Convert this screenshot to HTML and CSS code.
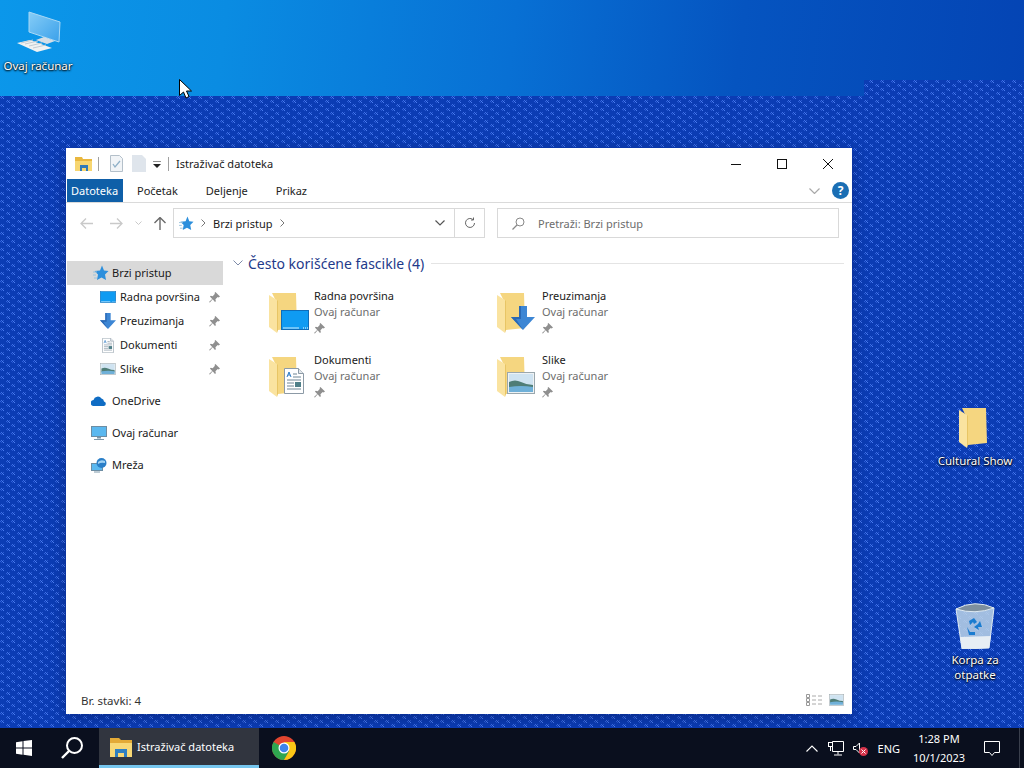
FILE: index.html
```html
<!DOCTYPE html>
<html lang="sr">
<head>
    <meta charset="UTF-8">
    <title>Istraživač datoteka</title>
    <link rel="stylesheet" href="styles.css">
</head>
<body>
    <svg class="defs" width="0" height="0">
        <defs>
            <pattern id="dither" width="11" height="8" patternUnits="userSpaceOnUse">
                <rect x="1" y="0" width="1" height="1" fill="#3f70e6"/>
                <rect x="3" y="0" width="1" height="1" fill="#2858d2"/>
                <rect x="0" y="1" width="1" height="1" fill="#2f60dc"/>
                <rect x="2" y="1" width="1" height="1" fill="#4a7cf0"/>
                <rect x="1" y="2" width="1" height="1" fill="#2858d2"/>
                <rect x="3" y="2" width="1" height="1" fill="#4a7cf0"/>
                <rect x="7" y="4" width="1" height="1" fill="#3f70e6"/>
                <rect x="9" y="4" width="1" height="1" fill="#2858d2"/>
                <rect x="6" y="5" width="1" height="1" fill="#2f60dc"/>
                <rect x="8" y="5" width="1" height="1" fill="#4a7cf0"/>
                <rect x="7" y="6" width="1" height="1" fill="#2858d2"/>
                <rect x="9" y="6" width="1" height="1" fill="#4a7cf0"/>
            </pattern>
            <linearGradient id="screen" x1="0" y1="0" x2="1" y2="1">
                <stop offset="0" stop-color="#86cdf7"/>
                <stop offset="1" stop-color="#3aa0ea"/>
            </linearGradient>
            <symbol id="folder" viewBox="0 0 28 40">
                <path d="M3 0h24l1 35-19 2V12z" fill="#f5d680"/>
                <path d="M0 2l8 5v33l-8-6z" fill="#fae3a0"/>
                <path d="M8 7v33l1-3V8z" fill="#e8c565"/>
            </symbol>
            <symbol id="desktop" viewBox="0 0 28 20">
                <rect x=".5" y=".5" width="27" height="19" fill="#0f9bf2" stroke="#0f6cb8"/>
                <path d="M2 18h16" stroke="#cfeeff"/>
                <path d="M22 18h1m1 0h1m1 0h1" stroke="#fff"/>
            </symbol>
            <symbol id="down" viewBox="0 0 24 24">
                <path d="M8 0h8v11h8L12 24 0 11h8z" fill="#3d86d4"/>
                <path d="M12 24L0 11h8V0h2v13H5z" fill="#2a68b4"/>
            </symbol>
            <symbol id="doc" viewBox="0 0 20 26">
                <path d="M.5.5h14l5 5v20H.5z" fill="#fff" stroke="#8c9aa6"/>
                <path d="M14.5 .5v5h5" fill="#e3e8ec" stroke="#8c9aa6"/>
                <path d="M3 9l2-5 2 5M4 7h2" fill="none" stroke="#2a79c4"/>
                <path d="M9 6h4M9 9h8M3 12h14M3 15h7M3 18h7M3 21h14" stroke="#6f8594"/>
                <rect x="11" y="14" width="6" height="5" fill="#4f7f88"/>
            </symbol>
            <symbol id="pic" viewBox="0 0 28 22">
                <rect x=".5" y=".5" width="27" height="21" fill="#eef2f4" stroke="#9aa7ad"/>
                <rect x="2" y="2" width="24" height="18" fill="#cfe3f1"/>
                <path d="M2 10q6-3 12 0t12 3v4H2z" fill="#4f7d76"/>
                <path d="M2 15q12-2 24 0v5H2z" fill="#6fb0d8"/>
            </symbol>
            <symbol id="star" viewBox="0 0 16 16">
                <path d="M9 .5l2 5 4.500.5-3.500 3.500 1 5.500-4.500-2.500L4 15l1-5.500L1.500 6l5.500-.5z" fill="#2c8fdc"/>
                <path d="M0 7h4M0 10h3M1 13h3" stroke="#9cc4de"/>
            </symbol>
            <symbol id="pin" viewBox="0 0 12 12">
                <path d="M7 0l5 5-1.500 1-1-.5L7 8l.5 2L6.500 11 4 8l-3 3.500L0 11l3.500-3.500L1 5l1-1 2 .5L6.500 2 6 1z" fill="#8f8f8f"/>
            </symbol>
        </defs>
    </svg>

    <div class="desktop">
        <svg class="dither-layer" width="1024" height="768"><rect width="1024" height="768" fill="url(#dither)"/></svg>
        <div class="sky"></div>

        <div class="desk-icon icon-pc">
            <svg width="48" height="46" viewBox="0 0 48 46">
                <path d="M15 2l31 10-1 20-30-10z" fill="url(#screen)" stroke="#a8d8f5"/>
                <path d="M22 30l8-3 11 4-8 3z" fill="#d5dee6"/>
                <path d="M3 33l13-3 22 8-15 4z" fill="#f0f2f2"/>
                <path d="M7 33l12-3M11 34l13-3M15 36l13-3M19 38l13-3" stroke="#c4ccd2"/>
            </svg>
            <span>Ovaj računar</span>
        </div>
        <div class="desk-icon icon-show">
            <svg width="28" height="40"><use href="#folder"/></svg>
            <span>Cultural Show</span>
        </div>
        <div class="desk-icon icon-bin">
            <svg width="40" height="46" viewBox="0 0 40 46">
                <path d="M1 6l38-1-5 40-27 1z" fill="#bcd4e8" fill-opacity=".85" stroke="#dfeaf2"/>
                <path d="M1 6q19-10 38-1-19 7-38 1z" fill="#7d8f9e" stroke="#dfeaf2"/>
                <path d="M5 34l31-1-2 12-27 1z" fill="#e7eef4"/>
                <path d="M14 18l5-3 3 4-3 2-1-2-3 3zM25 18l2 6h-4l1 3-5-3 4-3zM12 24l3 5h5v3h-6z" fill="#1a7cd0"/>
            </svg>
            <span>Korpa za<br>otpatke</span>
        </div>

        <svg class="cursor" width="13" height="21" viewBox="0 0 13 21">
            <path d="M.5.5v16l4-3.500 2.500 6 3-1.500-2.500-5.500h5z" fill="#fff" stroke="#000"/>
        </svg>

        <div class="window">
            <div class="titlebar">
                <svg width="17" height="15" viewBox="0 0 17 15">
                    <path d="M0 1h7l1 2h9v12H0z" fill="#e9b73f"/>
                    <path d="M0 5h17v10H0z" fill="#f7d671"/>
                    <path d="M5 9h8v6h-2v-3H7v3H5z" fill="#2f79b8"/>
                </svg>
                <i class="qa-sep"></i>
                <svg class="qa-doc" width="13" height="17" viewBox="0 0 13 17">
                    <path d="M.5.5h9l3 3v13H.5z" fill="#f1f4f7" stroke="#b4c0ca"/>
                    <path d="M3 9l2 3 5-6" fill="none" stroke="#8fb0c8" stroke-width="1.300"/>
                </svg>
                <svg class="qa-blank" width="14" height="17" viewBox="0 0 14 17">
                    <path d="M0 0h10l4 4v13H0z" fill="#dfe5ec"/>
                </svg>
                <svg class="qa-drop" width="8" height="7" viewBox="0 0 8 7">
                    <path d="M0 0h8" stroke="#222"/>
                    <path d="M0 3h8L4 7z" fill="#222"/>
                </svg>
                <i class="qa-sep qa-sep-last"></i>
                <span class="win-title">Istraživač datoteka</span>
                <div class="win-controls">
                    <svg width="10" height="10" viewBox="0 0 10 10"><path d="M0 5.500h10" stroke="#111"/></svg>
                    <svg width="10" height="10" viewBox="0 0 10 10"><rect x=".5" y=".5" width="9" height="9" fill="none" stroke="#111"/></svg>
                    <svg width="10" height="10" viewBox="0 0 10 10"><path d="M0 0l10 10M10 0L0 10" stroke="#111"/></svg>
                </div>
            </div>

            <div class="tabs">
                <span class="tab tab-file">Datoteka</span>
                <span class="tab">Početak</span>
                <span class="tab">Deljenje</span>
                <span class="tab">Prikaz</span>
                <svg class="ribbon-chevron" width="11" height="6" viewBox="0 0 11 6"><path d="M.5.5l5 5 5-5" fill="none" stroke="#a9a9a9" stroke-width="1.200"/></svg>
                <span class="help">?</span>
            </div>

            <div class="addressrow">
                <svg width="13" height="11" viewBox="0 0 13 11"><path d="M6 .5l-5 5 5 5M1 5.500h12" fill="none" stroke="#c9c9c9" stroke-width="1.300"/></svg>
                <svg class="arrow-fwd" width="13" height="11" viewBox="0 0 13 11"><path d="M7 .5l5 5-5 5M12 5.500H0" fill="none" stroke="#c9c9c9" stroke-width="1.300"/></svg>
                <svg class="nav-small" width="7" height="4" viewBox="0 0 7 4"><path d="M.5.500l3 3 3-3" fill="none" stroke="#c9c9c9"/></svg>
                <svg class="nav-up" width="12" height="13" viewBox="0 0 12 13"><path d="M.5 6l5.500-5.500L11.500 6M6 1v12" fill="none" stroke="#6a6a6a" stroke-width="1.400"/></svg>
                <div class="addressbox">
                    <svg width="15" height="15"><use href="#star"/></svg>
                    <svg class="crumb" width="5" height="8" viewBox="0 0 5 8"><path d="M.5.500l3.500 3.500-3.500 3.500" fill="none" stroke="#777"/></svg>
                    <span class="addr-text">Brzi pristup</span>
                    <svg class="crumb" width="5" height="8" viewBox="0 0 5 8"><path d="M.5.500l3.500 3.500-3.500 3.500" fill="none" stroke="#777"/></svg>
                    <svg class="addr-drop" width="10" height="6" viewBox="0 0 10 6"><path d="M.5.500l4.500 4.500 4.500-4.500" fill="none" stroke="#555" stroke-width="1.200"/></svg>
                    <div class="addr-refresh">
                        <svg width="12" height="12" viewBox="0 0 12 12"><path d="M10.500 6a4.500 4.500 0 1 1-1.500-3.400M9.500.5v2.500H7" fill="none" stroke="#666"/></svg>
                    </div>
                </div>
                <div class="searchbox">
                    <svg width="13" height="13" viewBox="0 0 13 13"><circle cx="8" cy="5" r="4" fill="none" stroke="#888"/><path d="M5 8l-4.500 4.500" stroke="#888" stroke-width="1.300"/></svg>
                    <span>Pretraži: Brzi pristup</span>
                </div>
            </div>

            <div class="panes">
                <nav class="sidebar">
                    <div class="nav-row active"><svg width="16" height="16"><use href="#star"/></svg><span>Brzi pristup</span></div>
                    <div class="nav-row sub"><svg width="16" height="12"><use href="#desktop"/></svg><span>Radna površina</span><svg class="pin" width="11" height="11"><use href="#pin"/></svg></div>
                    <div class="nav-row sub"><svg width="16" height="16"><use href="#down"/></svg><span>Preuzimanja</span><svg class="pin" width="11" height="11"><use href="#pin"/></svg></div>
                    <div class="nav-row sub"><svg width="16" height="15"><use href="#doc"/></svg><span>Dokumenti</span><svg class="pin" width="11" height="11"><use href="#pin"/></svg></div>
                    <div class="nav-row sub"><svg width="16" height="12"><use href="#pic"/></svg><span>Slike</span><svg class="pin" width="11" height="11"><use href="#pin"/></svg></div>
                    <div class="nav-row gap">
                        <svg width="16" height="10" viewBox="0 0 16 10"><path d="M3 10a3 3 0 0 1-.5-6A4.500 4.500 0 0 1 10.500 2.500 3.500 3.500 0 0 1 13 5.500a2.300 2.300 0 0 1 0 4.500z" fill="#0f6cc4"/></svg>
                        <span>OneDrive</span>
                    </div>
                    <div class="nav-row gap">
                        <svg width="16" height="15" viewBox="0 0 16 15"><rect x=".5" y=".5" width="15" height="10" fill="#5bb8ef" stroke="#6d8da3"/><path d="M6 11h4v1.500H6zM3 13h10v1H3z" fill="#7d98aa"/></svg>
                        <span>Ovaj računar</span>
                    </div>
                    <div class="nav-row gap">
                        <svg width="16" height="15" viewBox="0 0 16 15"><rect x=".5" y="5.500" width="11" height="7" fill="#5bb8ef" stroke="#6d8da3"/><path d="M3 13.500h6v1H3z" fill="#7d98aa"/><circle cx="10.500" cy="5" r="5" fill="#2a7fc8"/><path d="M7 4q3-3 7-1v2q-4-1-7 1z" fill="#9fd2f4"/></svg>
                        <span>Mreža</span>
                    </div>
                </nav>

                <main class="content">
                    <div class="group-head">
                        <svg width="10" height="6" viewBox="0 0 10 6"><path d="M.5.500l4.500 4.500 4.500-4.500" fill="none" stroke="#7d8aa8"/></svg>
                        <span>Često korišćene fascikle (4)</span>
                        <i></i>
                    </div>
                    <div class="tiles">
                        <div class="tile">
                            <svg class="tile-icon" width="40" height="40" viewBox="0 0 40 40"><use href="#folder" width="28" height="40"/><use href="#desktop" x="12" y="17" width="28" height="20"/></svg>
                            <div><div class="tile-name">Radna površina</div><div class="tile-sub">Ovaj računar</div><svg class="tile-pin" width="11" height="11"><use href="#pin"/></svg></div>
                        </div>
                        <div class="tile">
                            <svg class="tile-icon" width="40" height="40" viewBox="0 0 40 40"><use href="#folder" width="28" height="40"/><use href="#down" x="14" y="13" width="24" height="24"/></svg>
                            <div><div class="tile-name">Preuzimanja</div><div class="tile-sub">Ovaj računar</div><svg class="tile-pin" width="11" height="11"><use href="#pin"/></svg></div>
                        </div>
                        <div class="tile">
                            <svg class="tile-icon" width="40" height="40" viewBox="0 0 40 40"><use href="#folder" width="28" height="40"/><use href="#doc" x="15" y="11" width="20" height="26"/></svg>
                            <div><div class="tile-name">Dokumenti</div><div class="tile-sub">Ovaj računar</div><svg class="tile-pin" width="11" height="11"><use href="#pin"/></svg></div>
                        </div>
                        <div class="tile">
                            <svg class="tile-icon" width="40" height="40" viewBox="0 0 40 40"><use href="#folder" width="28" height="40"/><use href="#pic" x="10" y="15" width="28" height="22"/></svg>
                            <div><div class="tile-name">Slike</div><div class="tile-sub">Ovaj računar</div><svg class="tile-pin" width="11" height="11"><use href="#pin"/></svg></div>
                        </div>
                    </div>
                </main>
            </div>

            <div class="statusbar">
                <span>Br. stavki: 4</span>
                <svg class="view-list" width="16" height="12" viewBox="0 0 16 12">
                    <path d="M.5.500h3v3h-3zM.5 4.500h3v3h-3zM.5 8.500h3v3h-3z" fill="none" stroke="#999"/>
                    <path d="M6 2h4M12 2h4M6 6h4M12 6h4M6 10h4M12 10h4" stroke="#aaa"/>
                </svg>
                <svg class="view-tile" width="15" height="12"><use href="#pic"/></svg>
            </div>
        </div>

        <div class="taskbar">
            <svg class="start" width="16" height="16" viewBox="0 0 16 16">
                <path d="M0 2.300l6.500-1v6.200H0zM7.500 1.100L16 0v7.500H7.500zM0 8.500h6.500v6.200L0 13.700zM7.500 8.500H16V16l-8.500-1.200z" fill="#fff"/>
            </svg>
            <svg class="task-search" width="24" height="24" viewBox="0 0 24 24">
                <circle cx="14.500" cy="9.500" r="7.500" fill="none" stroke="#fff" stroke-width="2"/>
                <path d="M9 15L2 22" stroke="#fff" stroke-width="2.400"/>
            </svg>
            <div class="task-app">
                <svg width="22" height="20" viewBox="0 0 22 20">
                    <path d="M0 1h9l2 2h11v17H0z" fill="#e3aa37"/>
                    <path d="M0 6h22v14H0z" fill="#f8d876"/>
                    <path d="M5 12h12v8h-3v-4H8v4H5z" fill="#2f7fc1"/>
                </svg>
                <span>Istraživač datoteka</span>
            </div>
            <svg class="chrome" width="24" height="24" viewBox="0 0 24 24">
                <circle cx="12" cy="12" r="12" fill="#e2452f"/>
                <path d="M12 12L1.600 6A12 12 0 0 0 12 24l5.200-9z" fill="#2fa650"/>
                <path d="M12 6h10.400A12 12 0 0 1 12 24l5.200-9z" fill="#fbc716"/>
                <circle cx="12" cy="12" r="5.500" fill="#fff"/>
                <circle cx="12" cy="12" r="4.300" fill="#3f84ea"/>
            </svg>
            <div class="tray">
                <svg width="12" height="7" viewBox="0 0 12 7"><path d="M.5 6.500L6 1l5.500 5.500" fill="none" stroke="#fff" stroke-width="1.100"/></svg>
                <svg class="tray-net" width="16" height="15" viewBox="0 0 16 15">
                    <path d="M4.500.5h11v10h-11zM10 10.500v3M6 14h8" fill="none" stroke="#fff"/>
                    <rect x=".5" y="1.500" width="4" height="4" fill="#0a0f1e" stroke="#fff"/>
                    <path d="M2.500 5.500V10" stroke="#fff"/>
                </svg>
                <svg class="tray-sound" width="15" height="15" viewBox="0 0 15 15">
                    <path d="M.5 5.500h2.500L6.500 2v10L3 8.500H.5z" fill="none" stroke="#fff"/>
                    <circle cx="10.500" cy="10.500" r="4.500" fill="#d6324a"/>
                    <path d="M8.500 8.500l4 4m0-4l-4 4" stroke="#fff"/>
                </svg>
                <span class="tray-lang">ENG</span>
                <div class="clock"><div>1:28 PM</div><div>10/1/2023</div></div>
                <svg class="tray-notify" width="16" height="15" viewBox="0 0 16 15">
                    <path d="M.5.500h15v11h-5L8 14.500 5.500 11.500h-5z" fill="none" stroke="#fff"/>
                </svg>
                <i class="show-desktop"></i>
            </div>
        </div>
    </div>
</body>
</html>
```

FILE: styles.css
```css
* {
    box-sizing: border-box;
}
html, body {
    margin: 0;
    padding: 0;
}
body {
    width: 1024px;
    height: 768px;
    overflow: hidden;
    font-family: "Noto Sans", "Liberation Sans", sans-serif;
    font-size: 11px;
    color: #1a1a1a;
}
.defs {
    position: absolute;
}
svg {
    display: block;
    flex: none;
}
.desktop {
    position: relative;
    width: 1024px;
    height: 768px;
    background: #0b3cb4;
    overflow: hidden;
}
.dither-layer {
    position: absolute;
    left: 0;
    top: 0;
}
.sky {
    position: absolute;
    left: 0;
    top: 0;
    width: 1024px;
    height: 96px;
    background: linear-gradient(97deg, #0b97ea 0%, #0a8ce2 22%, #0870d4 50%, #0554c0 72%, #0444b4 100%);
    clip-path: polygon(0 0, 100% 0, 100% 80px, 864px 80px, 864px 96px, 0 96px);
}

/* desktop icons */
.desk-icon {
    position: absolute;
    display: flex;
    flex-direction: column;
    align-items: center;
    width: 80px;
    color: #fff;
    font-size: 11.500px;
    text-align: center;
    line-height: 15px;
    text-shadow: 0 1px 2px #000, 0 0 2px #000;
}
.icon-pc {
    left: -2px;
    top: 10px;
}
.icon-pc span {
    margin-top: 2px;
}
.icon-show {
    left: 935px;
    top: 408px;
}
.icon-show svg {
    margin-left: -5px;
}
.icon-show span {
    margin-top: 5px;
    white-space: nowrap;
}
.icon-bin {
    left: 935px;
    top: 603px;
}
.icon-bin span {
    margin-top: 3px;
}
.cursor {
    position: absolute;
    left: 179px;
    top: 79px;
}

/* explorer window */
.window {
    position: absolute;
    left: 66px;
    top: 148px;
    width: 786px;
    height: 566px;
    background: #fff;
    display: flex;
    flex-direction: column;
    box-shadow: 0 4px 14px rgba(0, 0, 40, 0.3);
}
.titlebar {
    height: 31px;
    display: flex;
    align-items: center;
    padding-left: 9px;
    flex: none;
}
.qa-sep {
    width: 1px;
    height: 14px;
    background: #a0a0a0;
    margin-left: 6px;
}
.qa-doc {
    margin-left: 11px;
}
.qa-blank {
    margin-left: 9px;
}
.qa-drop {
    margin-left: 7px;
    margin-top: 2px;
}
.qa-sep-last {
    margin-left: 7px;
}
.win-title {
    margin-left: 7px;
}
.win-controls {
    margin-left: auto;
    display: flex;
    gap: 36px;
    padding-right: 19px;
}
.tabs {
    height: 24px;
    display: flex;
    align-items: center;
    flex: none;
    padding-left: 1px;
    border-bottom: 1px solid #dadada;
}
.tab {
    height: 23px;
    line-height: 23px;
    padding: 0 14px;
    white-space: nowrap;
    color: #222;
}
.tab-file {
    width: 56px;
    padding: 0 4px;
    background: #0f5fa8;
    color: #fff;
}
.ribbon-chevron {
    margin-left: auto;
}
.help {
    width: 17px;
    height: 17px;
    margin: 0 3px 0 12px;
    border-radius: 50%;
    background: #1a6eb4;
    color: #fff;
    font-weight: 700;
    font-size: 12px;
    line-height: 17px;
    text-align: center;
}
.addressrow {
    height: 36px;
    display: flex;
    align-items: center;
    padding: 5px 13px 1px 14px;
    flex: none;
}
.arrow-fwd {
    margin-left: 17px;
}
.nav-small {
    margin-left: 12px;
}
.nav-up {
    margin-left: 12px;
}
.addressbox {
    width: 312px;
    height: 30px;
    margin-left: 7px;
    display: flex;
    align-items: center;
    border: 1px solid #d9d9d9;
    padding-left: 5px;
}
.crumb {
    margin-left: 7px;
}
.addr-text {
    margin-left: 7px;
}
.addr-drop {
    margin-left: auto;
    margin-right: 9px;
}
.addr-refresh {
    width: 30px;
    height: 28px;
    border-left: 1px solid #d9d9d9;
    display: flex;
    align-items: center;
    justify-content: center;
}
.searchbox {
    width: 342px;
    height: 30px;
    margin-left: 12px;
    display: flex;
    align-items: center;
    gap: 13px;
    padding-left: 14px;
    border: 1px solid #d9d9d9;
    color: #6d6d6d;
}
.panes {
    flex: 1;
    display: flex;
    min-height: 0;
    padding-top: 22px;
}
.sidebar {
    width: 157px;
    flex: none;
}
.nav-row {
    height: 24px;
    display: flex;
    align-items: center;
    padding-left: 26px;
    margin-left: 1px;
    white-space: nowrap;
}
.nav-row span {
    margin: 0 0 2px 3px;
}
.nav-row.active {
    background: #d9d9d9;
}
.nav-row.sub {
    padding-left: 33px;
}
.nav-row.sub span {
    margin-left: 4px;
}
.nav-row.gap {
    margin-top: 8px;
    padding-left: 24px;
}
.nav-row.gap span {
    margin-left: 5px;
}
.pin {
    margin-left: auto;
    margin-right: 3px;
}
.content {
    flex: 1;
    padding: 0 8px 0 10px;
}
.group-head {
    height: 20px;
    margin-top: -8px;
    display: flex;
    align-items: center;
}
.group-head span {
    margin-left: 5px;
    font-size: 14px;
    color: #1e3a8a;
    white-space: nowrap;
}
.group-head i {
    flex: 1;
    height: 1px;
    margin-left: 7px;
    background: #e4e4e4;
}
.tiles {
    display: grid;
    grid-template-columns: 228px 228px;
    grid-auto-rows: 64px;
    padding: 15px 0 0 35px;
}
.tile {
    display: flex;
    gap: 6px;
    line-height: 16px;
}
.tile-icon {
    margin: 5px 0 0 1px;
}
.tile > div {
    margin-left: -1px;
}
.tile-sub {
    color: #6d6d6d;
}
.tile-pin {
    margin-top: 3px;
}
.statusbar {
    height: 26px;
    display: flex;
    align-items: center;
    padding: 0 8px 2px 15px;
    flex: none;
    font-size: 11.500px;
    color: #333;
}
.view-list {
    margin-left: auto;
}
.view-tile {
    margin-left: 7px;
}

/* taskbar */
.taskbar {
    position: absolute;
    left: 0;
    right: 0;
    bottom: 0;
    height: 40px;
    display: flex;
    align-items: center;
    background: #0a0f1e;
    color: #fff;
}
.start {
    margin-left: 16px;
}
.task-search {
    margin-left: 28px;
}
.task-app {
    width: 160px;
    height: 40px;
    margin-left: 15px;
    display: flex;
    align-items: center;
    gap: 5px;
    padding-left: 11px;
    background: #31353f;
    border-bottom: 3px solid #76c6ee;
    white-space: nowrap;
}
.chrome {
    margin-left: 13px;
}
.tray {
    margin-left: auto;
    display: flex;
    align-items: center;
    height: 40px;
}
.tray-net {
    margin-left: 10px;
}
.tray-sound {
    margin-left: 9px;
}
.tray-lang {
    margin-left: 10px;
}
.clock {
    width: 80px;
    margin-right: 1px;
    margin-left: -1px;
    text-align: center;
    line-height: 19px;
}
.tray-notify {
    margin-left: 4px;
}
.show-desktop {
    width: 1px;
    height: 40px;
    margin-left: 19px;
    margin-right: 4px;
    background: #3a3f4c;
}
```
